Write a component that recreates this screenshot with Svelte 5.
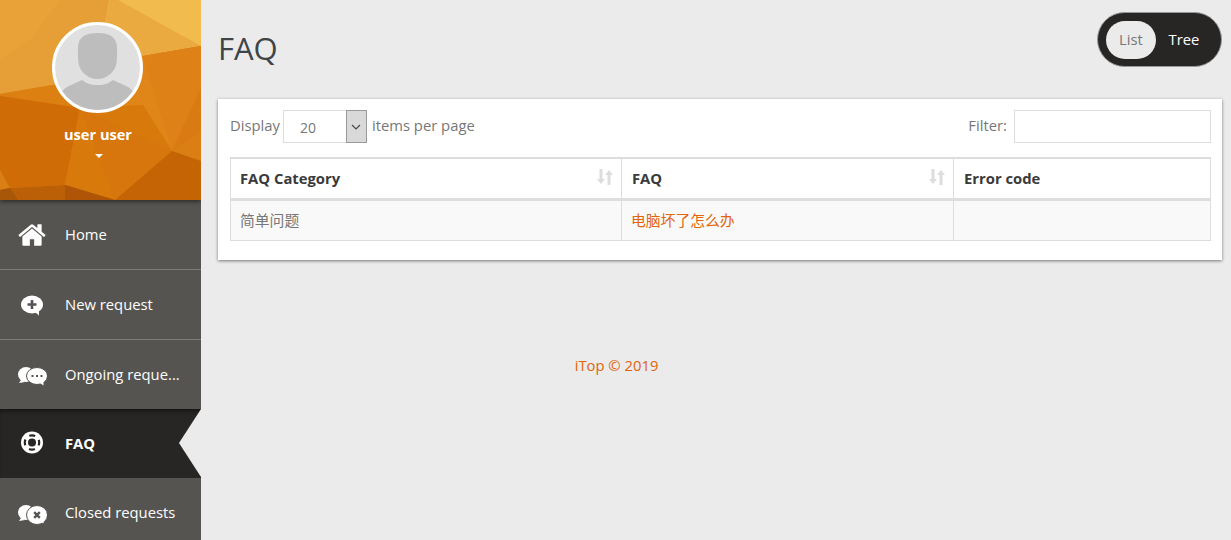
<script lang="ts">
  const polys = [
    ['0,0 201,0 201,200 0,200', '#d97f14'],
    ['0,0 108,0 100,48 70,82 0,94', '#e69f36'],
    ['0,0 60,0 30,40 0,60', '#e8a238'],
    ['108,0 201,0 201,46 143,56 100,48', '#ebaa40'],
    ['118,0 201,0 201,46', '#f1bb4d'],
    ['100,48 143,56 201,46 201,88 172,151 143,105 80,108 70,82', '#e08518'],
    ['143,56 201,46 201,88 172,151', '#de8116'],
    ['201,88 201,132 172,151', '#d97a12'],
    ['0,94 70,82 80,108', '#dd8012'],
    ['0,96 80,108 65,185 10,188 0,170', '#d06c06'],
    ['80,108 143,105 172,151 115,200 65,185', '#d8790c'],
    ['80,108 172,151 115,200', '#d6760c'],
    ['172,151 201,161 201,200 115,200', '#c46404'],
    ['10,188 65,185 115,200 0,200 0,190', '#bc6008'],
    ['65,185 115,200 65,200', '#ae5507'],
    ['0,190 10,188 18,200 0,200', '#a85608']
  ];
  const items = [
    { label: 'Home', icon: 'home' },
    { label: 'New request', icon: 'plus' },
    { label: 'Ongoing reque...', icon: 'dots' },
    { label: 'FAQ', icon: 'ring', active: true },
    { label: 'Closed requests', icon: 'close' }
  ];
</script>

<div class="page">
  <aside class="side">
    <div class="profile">
      <svg class="poly" viewBox="0 0 201 200" preserveAspectRatio="none" aria-hidden="true">
        {#each polys as p}<polygon points={p[0]} fill={p[1]} />{/each}
      </svg>
      <div class="avatar">
        <svg viewBox="0 0 85 85" aria-hidden="true">
          <path d="M42.5 8c-12 0-19 4-19.5 14-.3 6 0 12 .5 16 1 8 9 16 19 16s18-8 19-16c.5-4 .8-10 .5-16-.5-10-7.5-14-19.5-14z" fill="#bdbdbd" />
          <path d="M27 55l-15 7c-2 1-4 3-5 5v18h71V67c-1-2-3-4-5-5l-15-7c-4 3-8 5-15.500 5S31 58 27 55z" fill="#bdbdbd" />
        </svg>
      </div>
      <div class="name">user user</div>
      <div class="caret"></div>
    </div>
    <nav>
      {#each items as it}
        <div class="item" class:active={it.active}>
          <span class="ico">
            {#if it.icon === 'home'}
              <svg viewBox="0 0 1792 1792" width="30" height="30"><path fill="#fff" d="M1472 992v480q0 26-19 45t-45 19h-384v-384h-256v384h-384q-26 0-45-19t-19-45v-480q0-1 .5-3t.5-3l575-474 575 474q1 2 1 6zm223-69l-62 74q-8 9-21 11h-3q-13 0-21-7l-692-577-692 577q-12 8-24 7-13-2-21-11l-62-74q-8-10-7-23.5t11-21.5l719-599q32-26 76-26t76 26l244 204v-195q0-14 9-23t23-9h192q14 0 23 9t9 23v408l219 182q10 8 11 21.5t-7 23.5z" /></svg>
            {:else if it.icon === 'plus'}
              <svg viewBox="0 0 30 30" width="30" height="30">
                <ellipse cx="15" cy="14.500" rx="11" ry="9" fill="#fff" /><path d="M18 22l4 3.500v-5z" fill="#fff" />
                <path d="M15 10v9M10.500 14.500h9" stroke="#565450" stroke-width="2.600" />
              </svg>
            {:else if it.icon === 'ring'}
              <svg viewBox="0 0 30 30" width="30" height="30">
                <circle cx="15" cy="13.500" r="11" fill="#fff" />
                <circle cx="15" cy="13.500" r="7.200" fill="none" stroke="#282624" stroke-width="2.200" stroke-dasharray="6 5.310" stroke-dashoffset="3" />
                <circle cx="15" cy="13.500" r="4" fill="#282624" />
              </svg>
            {:else}
              <svg viewBox="0 0 30 30" width="30" height="30">
                <ellipse cx="9" cy="14.500" rx="8" ry="7.500" fill="#fff" /><path d="M4 20l-2 3 6-1z" fill="#fff" />
                <ellipse cx="20" cy={it.icon === 'dots' ? 16 : 17} rx="10.500" ry={it.icon === 'dots' ? 8.500 : 9.500} fill="#fff" stroke="#565450" stroke-width="1" /><path d="M23 23l3.500 2.500v-5z" fill="#fff" />
                {#if it.icon === 'dots'}
                  <path d="M14.500 16h2M19 16h2M23.500 16h2" stroke="#565450" stroke-width="2" />
                {:else}
                  <path d="M17.200 14.200l5.600 5.600M22.800 14.200l-5.600 5.600" stroke="#565450" stroke-width="2.400" />
                {/if}
              </svg>
            {/if}
          </span>
          <span class="label">{it.label}</span>
        </div>
      {/each}
    </nav>
  </aside>

  <main>
    <header>
      <h1>FAQ</h1>
      <div class="toggle">
        <span class="opt on">List</span>
        <span class="opt">Tree</span>
      </div>
    </header>

    <section class="card">
      <div class="controls">
        <div class="group">
          <span class="txt">Display</span>
          <span class="select">
            <span class="val">20</span>
            <span class="btn">
              <svg viewBox="0 0 10 6" width="10" height="6"><path d="M1 1l4 4 4-4" fill="none" stroke="#444" stroke-width="1.100" /></svg>
            </span>
          </span>
          <span class="txt">items per page</span>
        </div>
        <div class="group filter">
          <span class="txt">Filter:</span>
          <input type="text" />
        </div>
      </div>
      <table>
        <colgroup><col class="c1" /><col class="c2" /><col /></colgroup>
        <thead>
          <tr>
            <th>FAQ Category{@render sort()}</th>
            <th>FAQ{@render sort()}</th>
            <th>Error code</th>
          </tr>
        </thead>
        <tbody>
          <tr>
            <td>简单问题</td>
            <td class="link">电脑坏了怎么办</td>
            <td></td>
          </tr>
        </tbody>
      </table>
    </section>
  </main>
</div>
<footer>iTop © 2019</footer>

{#snippet sort()}
  <svg class="sort" viewBox="0 0 16 16" width="16" height="16">
    <path d="M2.500 0h3v10H8l-4 5-4-5h2.500z" fill="#ddd" />
    <path d="M10.500 16h3V6H16l-4-5-4 5h2.500z" fill="#ddd" />
  </svg>
{/snippet}

<style>
  :global(body) { margin: 0; background: #ebebeb; font-family: "Open Sans", "Noto Sans CJK SC", sans-serif; overflow: hidden; }
  .page { display: flex; height: 540px; }
  .side { width: 201px; flex: none; background: #565450; color: #fff; overflow: hidden; }
  .profile { position: relative; height: 200px; display: flex; flex-direction: column; align-items: center; box-sizing: border-box; padding: 22px 6px 0 0; box-shadow: 0 2px 4px rgba(0,0,0,.45); z-index: 1; }
  .poly { position: absolute; inset: 0; width: 100%; height: 100%; }
  .avatar { position: relative; width: 85px; height: 85px; border: 3px solid #fff; border-radius: 50%; background: #e0e0e0; overflow: hidden; }
  .avatar svg { display: block; }
  .name { position: relative; margin-top: 11px; font-size: 14.6px; font-weight: 700; line-height: 20px; padding-left: 1px; }
  .caret { position: relative; margin: 10px 0 0 3px; border: 4px solid transparent; border-top-color: #fff; border-bottom: 0; }
  .item { position: relative; display: flex; align-items: center; height: 70px; box-sizing: border-box; font-size: 14.8px; border-bottom: 1px solid #7d7b77; }
  .item:nth-child(3) { height: 69px; border-bottom: 0; }
  .item:last-child { border-bottom: 0; }
  .item.active { background: #282624; font-weight: 700; border-bottom: 0; height: 69px; box-shadow: inset 0 4px 4px -2px rgba(0,0,0,.5); }
  .item.active::after { content: ""; position: absolute; right: 0; top: 0; width: 22px; height: 68px; background: #ebebeb; clip-path: polygon(100% 0, 0 50%, 100% 100%); }
  .ico { width: 65px; flex: none; display: flex; padding-left: 17px; box-sizing: border-box; }
  .label { margin-top: -2px; }
  main { flex: 1; min-width: 0; padding: 0 9px 0 17px; }
  header { display: flex; justify-content: space-between; align-items: flex-start; height: 99px; }
  h1 { margin: 28px 0 0; font-size: 31px; font-weight: 400; line-height: 40px; color: #3f4448; }
  .toggle { display: flex; align-items: center; margin-top: 12px; height: 55px; width: 125px; box-sizing: border-box; padding-left: 8px; background: #282624; border: 1px solid #999; border-radius: 28px; font-size: 14.8px; color: #fff; }
  .opt { width: 50px; height: 38px; line-height: 36px; text-align: center; border-radius: 19px; margin-right: 3px; }
  .opt.on { background: #ebebeb; color: #777; }
  .card { background: #fff; height: 161px; box-sizing: border-box; padding: 11px 11px 0 12px; box-shadow: 0 1px 3px rgba(0,0,0,.5); }
  .controls { display: flex; justify-content: space-between; height: 33px; color: #777; font-size: 14.8px; }
  .group { display: flex; align-items: center; gap: 5px; }
  .txt { margin-top: -3px; }
  .filter { gap: 7px; }
  .select { display: flex; width: 84px; height: 33px; box-sizing: border-box; border: 1px solid #ddd; margin-left: -2px; }
  .val { flex: 1; font-size: 14px; padding: 8px 0 0 16px; line-height: 18px; }
  .btn { width: 21px; background: #d9d9d9; border: 1px solid #999; box-sizing: border-box; display: flex; align-items: center; justify-content: center; margin: -1px -1px -1px 0; height: 33px; }
  input { width: 197px; height: 33px; box-sizing: border-box; border: 1px solid #ddd; padding: 0; background: #fff; }
  table { width: 981px; margin-top: 14px; border-collapse: collapse; table-layout: fixed; font-size: 14.8px; }
  .c1 { width: 391px; }
  .c2 { width: 332px; }
  th, td { border: 1px solid #ddd; padding: 0 9px; text-align: left; box-sizing: border-box; }
  th:nth-child(n+2) { padding-left: 10px; }
  th { position: relative; height: 41px; border-top-width: 2px; border-bottom-width: 3px; color: #3a3a3a; font-weight: 700; }
  td { height: 41px; padding-bottom: 2px; background: #f9f9f9; color: #777; }
  .link { color: #e0650c; }
  .sort { position: absolute; right: 8px; top: 10px; }
  footer { position: absolute; top: 355px; left: 1px; width: 1231px; text-align: center; font-size: 14.8px; line-height: 20px; color: #e0650c; }
</style>
